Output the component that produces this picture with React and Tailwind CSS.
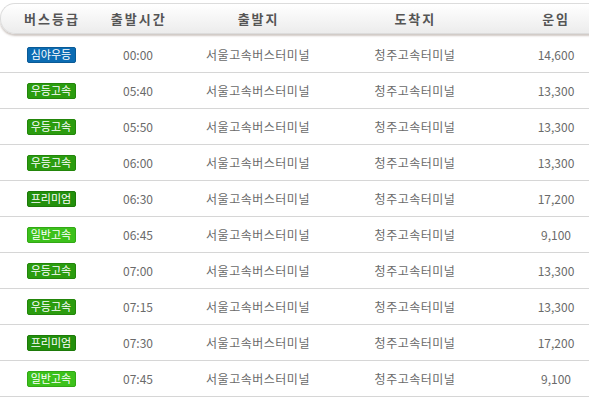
import React from 'react'

const ROWS = [
  { grade: '심야우등', time: '00:00', fare: '14,600' },
  { grade: '우등고속', time: '05:40', fare: '13,300' },
  { grade: '우등고속', time: '05:50', fare: '13,300' },
  { grade: '우등고속', time: '06:00', fare: '13,300' },
  { grade: '프리미엄', time: '06:30', fare: '17,200' },
  { grade: '일반고속', time: '06:45', fare: '9,100' },
  { grade: '우등고속', time: '07:00', fare: '13,300' },
  { grade: '우등고속', time: '07:15', fare: '13,300' },
  { grade: '프리미엄', time: '07:30', fare: '17,200' },
  { grade: '일반고속', time: '07:45', fare: '9,100' },
]

const BADGE = {
  '심야우등': 'bg-[#0b6cb3] border-[#0a5a96]',
  '우등고속': 'bg-[#2b9c0f] border-[#23860b]',
  '프리미엄': 'bg-[#23900c] border-[#1d7a09]',
  '일반고속': 'bg-[#3cc11b] border-[#32a815]',
}

const COLS = ['w-[102px]', 'w-[72px]', 'w-[168px]', 'w-[146px]', 'w-[136px]']

function Badge({ label }) {
  return (
    <span
      className={`inline-flex items-center justify-center w-[49px] h-[16px] rounded-[2px] border text-white text-[11px] leading-none ${BADGE[label]}`}
    >
      {label}
    </span>
  )
}

export default function App() {
  const font = { fontFamily: '"Noto Sans CJK KR", "Noto Sans", sans-serif' }
  return (
    <div className="w-[589px] h-[400px] overflow-hidden bg-white" style={font}>
      <div className="w-[624px]">
        <div className="pt-[3px] pb-[3px]">
          <div className="flex h-[31px] items-center rounded-l-[15px] border border-r-0 border-[#dcdcdc] bg-gradient-to-b from-white to-[#ececec] shadow-[0_2px_2px_rgba(120,100,90,0.35)] text-[13px] font-bold text-[#555] tracking-[2px]">
            {['버스등급', '출발시간', '출발지', '도착지', '운임'].map((h, i) => (
              <div key={h} className={`${COLS[i]} text-center`}>{h}</div>
            ))}
          </div>
        </div>
        <div>
          {ROWS.map((r, idx) => (
            <div key={idx} className="flex h-[36px] items-center border-b border-[#d6d6d6] text-[12px] text-[#6a6a6a] tracking-[0.5px]">
              <div className={`${COLS[0]} flex justify-center tracking-normal`}><Badge label={r.grade} /></div>
              <div className={`${COLS[1]} text-center tracking-normal`}>{r.time}</div>
              <div className={`${COLS[2]} text-center`}>서울고속버스터미널</div>
              <div className={`${COLS[3]} text-center`}>청주고속터미널</div>
              <div className={`${COLS[4]} text-center tracking-normal`}>{r.fare}</div>
            </div>
          ))}
        </div>
      </div>
    </div>
  )
}
